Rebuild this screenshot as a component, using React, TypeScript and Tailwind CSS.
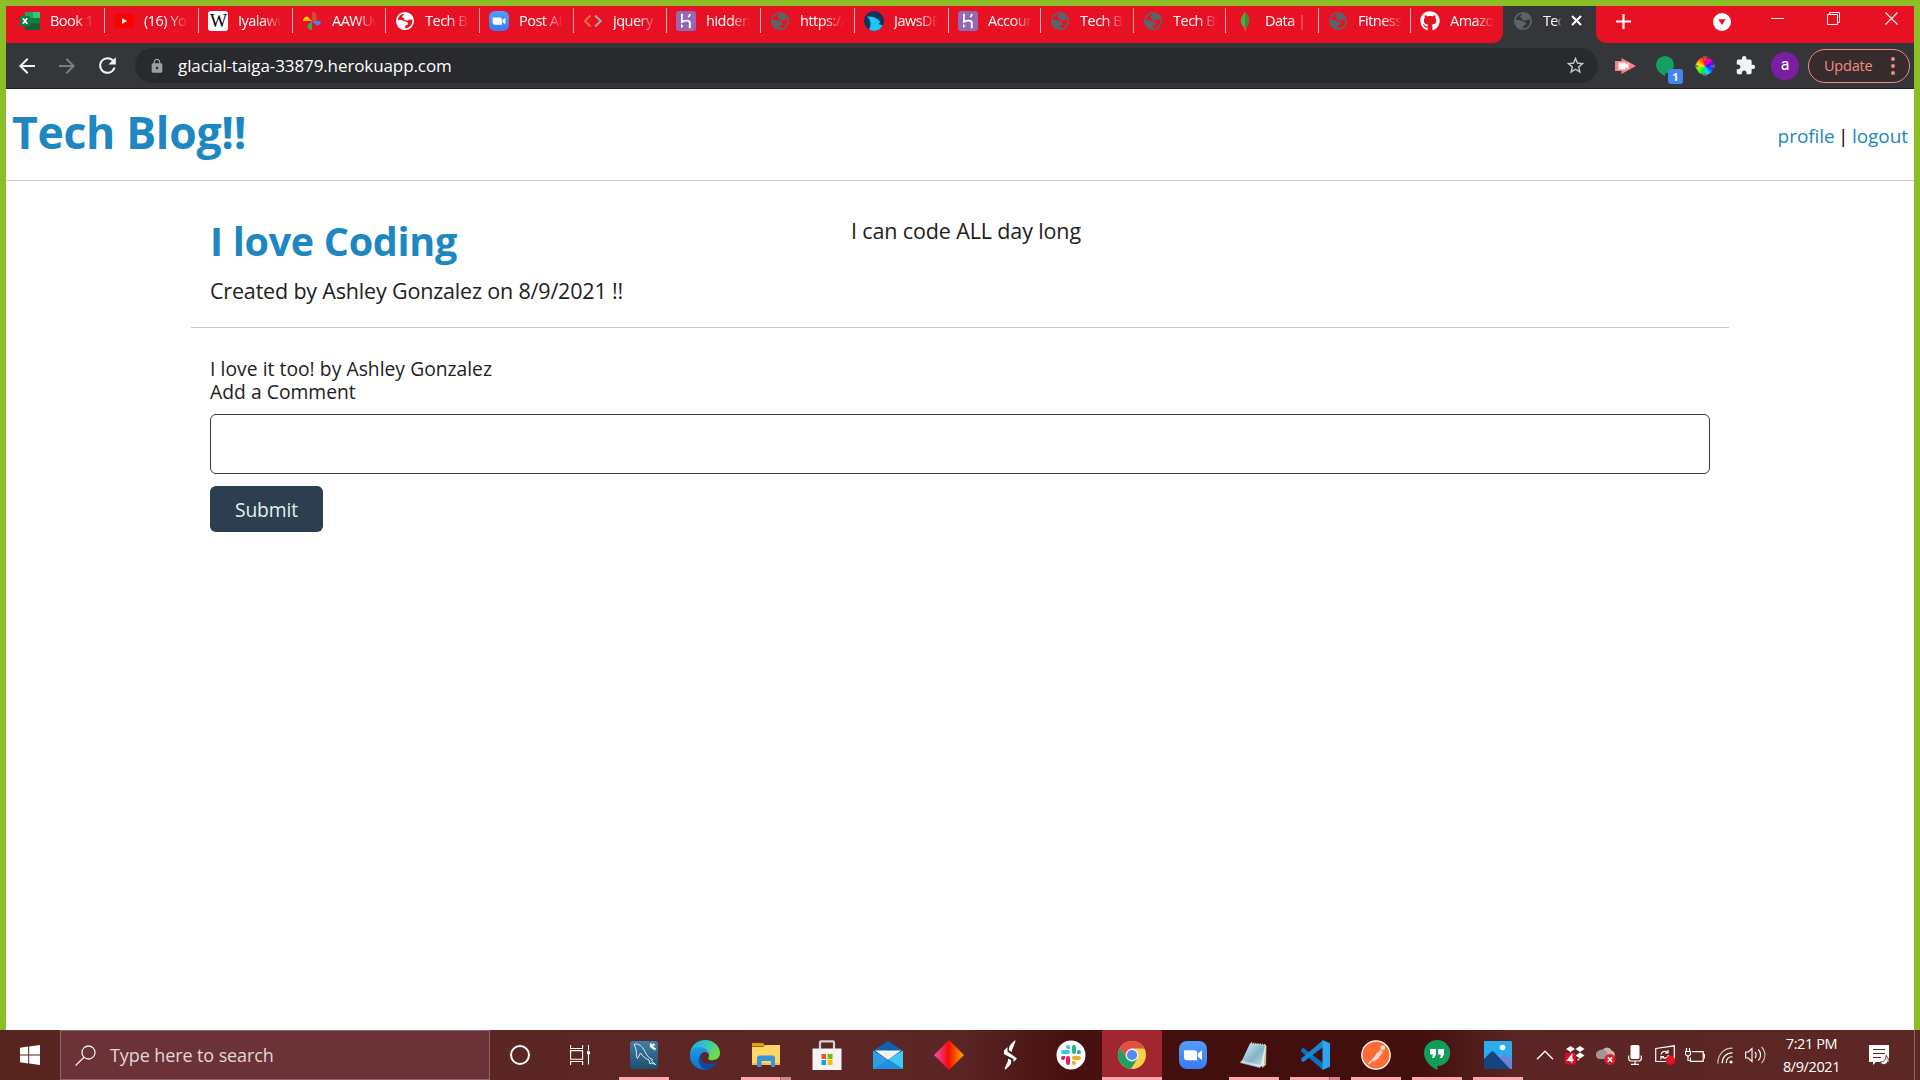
import React from 'react';
import type { ReactNode } from 'react';
import { MdLock, MdExtension, MdStarBorder, MdArrowBack, MdArrowForward, MdRefresh } from 'react-icons/md';
import { FaGithub } from 'react-icons/fa';

/* ---------- tab icons ---------- */

function Globe({ color }: { color: string }) {
  return (
    <svg width="20" height="20" viewBox="0 0 20 20">
      <circle cx="10" cy="10" r="8.2" fill="none" stroke={color} strokeWidth="1.7" />
      <path
        fill={color}
        d="M10 1.8 C13 1.500 16 3.2 17.5 6.5 L17 8.500 L14 8.700 L12.500 9.800 L9.500 9 L8.800 7 L6.800 6 L8.500 4 Z M2 9 L6.500 9 L9.500 10.300 L12.500 11.300 L13 13.500 L10.500 14.500 L9.500 17.800 C5 17.500 2 14 2 9 Z"
      />
    </svg>
  );
}

function Excel() {
  return (
    <svg width="20" height="20" viewBox="0 0 20 20">
      <path fill="#21a366" d="M5 1h8v6H5z" />
      <path fill="#33c481" d="M13 1h7v6h-7z" />
      <path fill="#107c41" d="M5 7h8v6H5zM13 7h7v6h-7z" />
      <path fill="#185c37" d="M5 12.5h15V19H5z" />
      <path fill="#107c41" d="M0 5h10v10H0z" />
      <path stroke="#fff" strokeWidth="1.7" d="M2.8 7.2 7.2 12.8M7.2 7.2 2.8 12.8" />
    </svg>
  );
}

function Youtube() {
  return (
    <svg width="20" height="20" viewBox="0 0 20 20">
      <rect y="3" width="20" height="14" rx="3" fill="#ff0000" />
      <path fill="#fff" d="M8 7.2v5.6l5-2.8z" />
    </svg>
  );
}

function Wikipedia() {
  return (
    <span className="flex h-5 w-5 items-center justify-center rounded-[3px] bg-white font-['Liberation_Serif',serif] text-[18px] leading-none tracking-[-1px] text-black">
      W
    </span>
  );
}

function Photos() {
  return (
    <svg width="20" height="20" viewBox="0 0 20 20">
      <path fill="#d5493a" d="M10 1c3 0 4.7 2 4.7 4.5V10L10 9.500z" />
      <path fill="#4285f4" d="M19 10c0 3-2 4.600-4.500 4.600L10 10z" />
      <path fill="#34a853" d="M10 19c-3 0-4.600-2-4.600-4.500L10 10z" />
      <path fill="#fbbc04" d="M1 10c0-3 2-4.600 4.500-4.600L10 10z" />
    </svg>
  );
}

function ZoomLogo({ size }: { size: number }) {
  return (
    <svg width={size} height={size} viewBox="0 0 28 28">
      <defs>
        <linearGradient id="zm" x1="0" y1="0" x2="0" y2="1">
          <stop offset="0" stopColor="#539cfb" />
          <stop offset="1" stopColor="#3a7bf5" />
        </linearGradient>
      </defs>
      <rect width="28" height="28" rx="8" fill="url(#zm)" />
      <path fill="#fff" d="M5 9.200h10.500a2.500 2.500 0 0 1 2.500 2.500v7.500H8a3 3 0 0 1-3-3zM18.800 12.500l4.200-3.200v9.600l-4.200-3.200z" />
    </svg>
  );
}

function Code() {
  return (
    <svg width="20" height="20" viewBox="0 0 20 20" fill="none" strokeWidth="2">
      <path stroke="#f0703c" d="M7.500 4.500 1.800 10l5.700 5.500" />
      <path stroke="#a4a9b0" d="M12 4.500 17.700 10 12 15.500" />
    </svg>
  );
}

function Heroku() {
  return (
    <svg width="20" height="20" viewBox="0 0 20 20">
      <rect width="20" height="20" rx="3" fill="#9468b4" />
      <path fill="none" stroke="#fff" strokeWidth="1.900" d="M5.900 2.800v8c2.500-1.300 7.900-2.300 7.900 1V17.200" />
      <path fill="none" stroke="#fff" strokeWidth="1.700" d="M14 2.800c-.2 1.400-.8 2.400-1.800 3.500" />
      <path fill="#fff" d="M5 12.800 7.600 15 5 17.200z" />
    </svg>
  );
}

function Jaws() {
  return (
    <svg width="20" height="20" viewBox="0 0 20 20">
      <circle cx="10" cy="10" r="10" fill="#0b3560" />
      <path fill="#20c4f4" d="M3 5.500c5-.5 10 1 13.500 5.500L14.500 13l4.300 1.500A10 10 0 0 1 5 18.600C7.500 14 7 9 3 5.500z" />
    </svg>
  );
}

function Mongo() {
  return (
    <svg width="20" height="20" viewBox="0 0 20 20">
      <path fill="#4faa41" d="M10 .8c1.500 3 4.200 4.700 4.200 9 0 3.800-2 5.800-4.200 7.400-2.200-1.600-4.200-3.600-4.200-7.400 0-4.300 2.700-6 4.200-9z" />
      <path fill="#3b8b38" d="M10 .8c1.500 3 4.200 4.700 4.200 9 0 3.800-2 5.800-4.200 7.400z" />
      <path fill="#b8a084" d="M9.600 16.500h.9l.2 3h-1z" />
    </svg>
  );
}

interface TabData {
  width: string;
  title: string;
  icon: ReactNode;
}

const tabs: TabData[] = [
  { width: 'w-[94px]', title: 'Book 1', icon: <Excel /> },
  { width: 'w-[94px]', title: '(16) You', icon: <Youtube /> },
  { width: 'w-[94px]', title: 'Iyalawo', icon: <Wikipedia /> },
  { width: 'w-[93px]', title: 'AAWUw', icon: <Photos /> },
  { width: 'w-[94px]', title: 'Tech Bl', icon: <Globe color="#ffffff" /> },
  { width: 'w-[94px]', title: 'Post Att', icon: <ZoomLogo size={20} /> },
  { width: 'w-[93px]', title: 'jquery', icon: <Code /> },
  { width: 'w-[94px]', title: 'hidden', icon: <Heroku /> },
  { width: 'w-[94px]', title: 'https://', icon: <Globe color="#5f6368" /> },
  { width: 'w-[94px]', title: 'JawsDB', icon: <Jaws /> },
  { width: 'w-[92px]', title: 'Account', icon: <Heroku /> },
  { width: 'w-[93px]', title: 'Tech Bl', icon: <Globe color="#5f6368" /> },
  { width: 'w-[92px]', title: 'Tech Bl', icon: <Globe color="#5f6368" /> },
  { width: 'w-[93px]', title: 'Data | C', icon: <Mongo /> },
  { width: 'w-[92px]', title: 'Fitness', icon: <Globe color="#5f6368" /> },
];

const fade = '[mask-image:linear-gradient(to_right,black_55%,transparent_98%)]';

function Tab({ width, title, icon, last }: TabData & { last?: boolean }) {
  return (
    <div className={`flex h-[29px] shrink-0 items-center ${width}`}>
      <span className="ml-[9px] flex h-5 w-5 shrink-0 items-center justify-center">{icon}</span>
      <span className={`ml-[10px] w-[45px] overflow-hidden whitespace-nowrap text-[14.5px] leading-5 tracking-[-0.5px] text-white ${fade}`}>
        {title}
      </span>
      {!last && <span className="ml-auto h-[25px] w-px bg-[#f8b4ba]" />}
    </div>
  );
}

function TabStrip() {
  return (
    <div className="flex h-[37px] bg-[#e81123] pl-[5px]">
      {tabs.map((t, i) => (
        <Tab key={i} {...t} />
      ))}
      <div className="flex h-[37px] w-[92px] shrink-0 bg-[#35363a]">
        <div className="h-[37px] w-[92px] rounded-br-[10px] bg-[#e81123]">
          <Tab width="w-[92px]" title="Amazon" icon={<FaGithub size={20} color="#fff" />} last />
        </div>
      </div>
      <div className="flex h-[37px] w-[93px] shrink-0 bg-[#35363a]">
        <div className="flex h-[29px] items-center">
          <span className="ml-[10px]">
            <Globe color="#5f6368" />
          </span>
          <span className="ml-[10px] w-[19px] overflow-hidden whitespace-nowrap text-[14.5px] leading-5 tracking-[-0.8px] text-white [mask-image:linear-gradient(to_right,black_65%,transparent)]">
            Tech
          </span>
          <svg className="ml-[9px]" width="11" height="11" viewBox="0 0 11 11" stroke="#fff" strokeWidth="2">
            <path d="M1 1 10 10M10 1 1 10" />
          </svg>
        </div>
      </div>
      <div className="-mr-px h-[37px] w-[318px] bg-[#35363a]">
        <div className="flex h-[37px] rounded-bl-[10px] bg-[#e81123] pl-[20px]">
          <svg className="mt-[8px]" width="15" height="15" viewBox="0 0 15 15" stroke="#fff" strokeWidth="2.200">
            <path d="M7.500 0V15M0 7.500H15" />
          </svg>
          <svg className="ml-[82px] mt-[7px]" width="18" height="18" viewBox="0 0 18 18">
            <circle cx="9" cy="9" r="9" fill="#fff" />
            <path fill="#e81123" d="M5.300 6.200h7.400L9 12z" />
          </svg>
          <svg className="ml-[40px] mt-[12px]" width="13" height="1" viewBox="0 0 13 1">
            <path fill="#fff" d="M0 0h13v1H0z" />
          </svg>
          <svg className="ml-[43px] mt-[6px]" width="13" height="13" viewBox="0 0 13 13" fill="none" stroke="#fff">
            <path d="M.5 2.500h10v10H.5zM2.500 2.500v-2h10v10h-2" />
          </svg>
          <svg className="ml-[45px] mt-[6px]" width="13" height="13" viewBox="0 0 13 13" stroke="#fff" strokeWidth="1.100">
            <path d="M.5.500 12.500 12.500M12.500.500.5 12.500" />
          </svg>
        </div>
      </div>
    </div>
  );
}

function ColorWheel() {
  return (
    <span className="relative flex h-5 w-5 items-center justify-center">
      <span className="h-[18px] w-[18px] rounded-full bg-[conic-gradient(#ff0030,#ff00d0,#4b00ff,#0060ff,#00e5ff,#00e060,#60ff00,#ffee00,#ff7000,#ff0030)]" />
      <svg className="absolute inset-0" width="20" height="20" viewBox="0 0 20 20" fill="#35363a" stroke="#b0b0b0" strokeWidth=".5">
        <path d="M10 4.500 8.800 0h2.400zM10 15.500 8.800 20h2.400zM4.500 10 0 8.800v2.400zM15.500 10 20 8.800v2.400z" />
      </svg>
    </span>
  );
}

function Toolbar() {
  return (
    <div className="flex h-[46px] items-center border-b border-[#232427] bg-[#35363a] text-[#f1f3f4]">
      <MdArrowBack size={24} className="ml-[9px]" />
      <MdArrowForward size={24} className="ml-[16px] text-[#7d7e81]" />
      <MdRefresh size={25} className="ml-[16px]" />
      <div className="ml-[15px] flex h-[35px] w-[1463px] items-center rounded-full bg-[#292a2d]">
        <MdLock size={16} className="ml-[14px] text-[#9aa0a6]" />
        <span className="ml-[13px] text-[17px] leading-6 tracking-[-0.1px] text-white">glacial-taiga-33879.herokuapp.com</span>
        <MdStarBorder size={21} className="ml-auto mr-[12px] text-[#c8cacd]" />
      </div>
      <svg className="ml-[17px]" width="21" height="16" viewBox="0 0 21 16">
        <path fill="#ff8080" d="M0 3h6.500V0L21 8 6.500 16v-3H0z" />
        <path fill="#fff" d="M3.500 4.500h7V7l3-2.500v7l-3-2.500v2.500h-7z" />
      </svg>
      <span className="relative ml-[20px] h-[30px] w-[27px]">
        <svg className="absolute left-0 top-[5px]" width="19" height="20" viewBox="0 0 19 20">
          <path fill="#12a05c" d="M9 0a9 8.700 0 1 1 0 17.400V20C5 18 0 14 0 8.700A9 8.700 0 0 1 9 0z" />
        </svg>
        <span className="absolute left-[12px] top-[18px] h-[15px] w-[15px] rounded-[3px] bg-[#4285f4] text-center text-[11px] font-bold leading-[15px] text-white">
          1
        </span>
      </span>
      <span className="ml-[12px]">
        <ColorWheel />
      </span>
      <MdExtension size={21} className="ml-[20px]" />
      <span className="ml-[15px] flex h-7 w-7 items-center justify-center rounded-full bg-[#7b1fa2] pb-[2px] font-[Roboto,sans-serif] text-[16px] text-white">
        a
      </span>
      <div className="ml-[9px] flex h-[34px] w-[102px] shrink-0 items-center rounded-full border border-[#f28b82] bg-[#372b2d]">
        <span className="ml-[15px] w-[49px] whitespace-nowrap text-[14.5px] tracking-[-0.2px] text-[#f28b82]">Update</span>
        <span className="ml-[18px] flex flex-col gap-[3px]">
          <span className="h-1 w-1 rounded-full bg-[#f28b82]" />
          <span className="h-1 w-1 rounded-full bg-[#f28b82]" />
          <span className="h-1 w-1 rounded-full bg-[#f28b82]" />
        </span>
      </div>
    </div>
  );
}

function BlogPage() {
  return (
    <div className="flex-1 bg-white text-[#212121]">
      <header className="flex h-[92px] justify-between border-b border-[#cccccc] px-[6px]">
        <h1 className="pt-[13px] text-[44.5px] font-bold leading-[60px] tracking-[-0.3px] text-[#1c87c0]">Tech Blog!!</h1>
        <nav className="pt-[35px] text-[19px] leading-[24px] tracking-[-0.05px] text-black [word-spacing:-1.5px]">
          <a className="text-[#1c87c0]">profile</a> | <a className="text-[#1c87c0]">logout</a>
        </nav>
      </header>
      <main className="ml-[185px] mt-[31px] w-[1538px]">
        <section className="flex h-[116px] border-b border-[#c8c8c8] px-[19px]">
          <div className="w-[641px]">
            <h2 className="pt-[2px] text-[39.5px] font-bold leading-[54px] tracking-[-0.3px] text-[#1c87c0]">I love Coding</h2>
            <p className="mt-[8px] text-[21.5px] leading-[30px] tracking-[-0.18px]">Created by Ashley Gonzalez on 8/9/2021 !!</p>
          </div>
          <p className="pt-[4px] text-[21.5px] leading-[30px] tracking-[-0.13px]">I can code ALL day long</p>
        </section>
        <section className="px-[19px] pt-[29px] text-[19.25px] leading-[23px] [word-spacing:0.2px]">
          <p>I love it too! by Ashley Gonzalez</p>
          <p>Add a Comment</p>
          <div className="mt-[11px] h-[60px] rounded-md border border-[#3c3c3c] bg-white" />
          <button className="mt-[12px] h-[46px] w-[113px] rounded-md bg-[#2d3e50] text-[19.25px] tracking-[-0.1px] text-[#dff3ec]">Submit</button>
        </section>
      </main>
    </div>
  );
}

/* ---------- taskbar icons ---------- */

function Workbench() {
  return (
    <svg width="28" height="28" viewBox="0 0 28 28">
      <defs>
        <linearGradient id="wb" x1="0" y1="0" x2="0" y2="1">
          <stop offset="0" stopColor="#3f7ea8" />
          <stop offset="1" stopColor="#1e4f6e" />
        </linearGradient>
      </defs>
      <rect width="28" height="28" rx="3" fill="url(#wb)" />
      <path
        fill="none"
        stroke="#e3eef5"
        strokeWidth="1"
        d="M4 3.500c3-1.500 7 .5 9.500 4.500 2 3 3 6.500 6 9l3 1.500-1 1.500 4 3.500-4-1.500-1.500 1-1-4c-4-1.500-6.500-4-8.500-7l-3 5.500c-2-2-.5-6-1.500-9C5.500 6.500 5 5 4 3.500z"
      />
      <path stroke="#fff" strokeWidth="2.200" d="M21 2.500v3l4.500 3M24.500 3l-3.500 3" />
    </svg>
  );
}

function Edge() {
  return (
    <svg width="30" height="30" viewBox="0 0 30 30">
      <defs>
        <linearGradient id="eg1" x1="0" y1="0" x2="1" y2=".5">
          <stop offset="0" stopColor="#1fa4e8" />
          <stop offset=".5" stopColor="#35c4c0" />
          <stop offset="1" stopColor="#6fdc4e" />
        </linearGradient>
        <linearGradient id="eg2" x1="0" y1="0" x2="0" y2="1">
          <stop offset="0" stopColor="#1e9be6" />
          <stop offset="1" stopColor="#0c6fd0" />
        </linearGradient>
      </defs>
      <path fill="url(#eg1)" d="M0 14C.8 5.500 7 0 15 0c9 0 15 6.500 15 13 0 5-4 7.200-7.500 7.200-3.500 0-5-1.200-4-2.700 2-3.500-1-7-5-7C7 10.500 3 14 0 14z" />
      <path fill="url(#eg2)" d="M0 15.500C0 10 4.500 7 9.500 7c5.500 0 9.500 3.500 9.500 8-1-3-6.500-5-8.500 0C8 22 13 28 19.500 29.300 8.500 32 0 25 0 15.500z" />
      <path fill="#114a9b" d="M11.500 13.500C9 18 12 23 18 23.800c4 .5 7-.6 9.800-2.300C25.500 26 20.500 30 16 30 8.500 27.500 6.500 18 11.500 13.500z" />
    </svg>
  );
}

function Explorer() {
  return (
    <svg width="28" height="24" viewBox="0 0 28 24">
      <path fill="#e3a200" d="M0 0h11l3 3.500H0z" />
      <path fill="#ffd565" d="M0 4h11l2.500-2H28v20H0z" />
      <path fill="#f3c146" d="M0 20h28v2H0z" />
      <path fill="#3a94dc" d="M5 24V15a2.500 2.500 0 0 1 2.500-2.500h13A2.500 2.500 0 0 1 23 15v9h-4v-6H9.500v6z" />
    </svg>
  );
}

function Store() {
  return (
    <svg width="30" height="30" viewBox="0 0 30 30">
      <path fill="none" stroke="#d4d4d4" strokeWidth="2.200" d="M8 9V2.500a1.200 1.200 0 0 1 1.200-1.200h11.600A1.200 1.200 0 0 1 22 2.500V9" />
      <path fill="#f3f3f3" d="M.5 8.500h29V30H.5z" />
      <path fill="#f25022" d="M9.500 14H14v5H9.500z" />
      <path fill="#7fba00" d="M15.500 14h5v5h-5z" />
      <path fill="#00a4ef" d="M9.500 20H14v5H9.500z" />
      <path fill="#ffb900" d="M15.500 20h5v5h-5z" />
    </svg>
  );
}

function Mail() {
  return (
    <svg width="30" height="28" viewBox="0 0 30 28">
      <path fill="#0a63b5" d="M0 10 15 0l15 10v4H0z" />
      <path fill="#f4f4f4" d="M2 9.500h26L15 19z" />
      <path fill="#2c9fe6" d="M0 9.500 15 19l15 9H0z" />
      <path fill="#42c8f5" d="M30 9.500V28L15 18.500z" />
      <path fill="#1f8fe0" d="M0 28l15-9.500L30 28z" />
    </svg>
  );
}

function Diamond() {
  return (
    <svg width="30" height="30" viewBox="0 0 30 30">
      <defs>
        <linearGradient id="dm">
          <stop offset="0" stopColor="#ee4fc0" />
          <stop offset=".48" stopColor="#fb0a0a" />
          <stop offset=".52" stopColor="#f51800" />
          <stop offset="1" stopColor="#ffa800" />
        </linearGradient>
      </defs>
      <path fill="url(#dm)" d="M15 0 30 15 15 30 0 15z" />
    </svg>
  );
}

function Bolt() {
  return (
    <svg width="14" height="30" viewBox="0 0 14 30" fill="#fff">
      <path d="M12.500 0C8 3.500 5.500 6 6 10.500l3 1.500C9 7.500 12 5.500 12.500 0zM1 10.500 4.500 7v4.500L14 18.500 10.500 22v-3L.8 14zM1.800 30C6 26.500 9 24.500 8 20l-3-1.500C5.500 23 2 24.500 1.800 30z" />
    </svg>
  );
}

function Slack() {
  return (
    <svg width="30" height="30" viewBox="0 0 30 30">
      <circle cx="15" cy="15" r="14.500" fill="#fff" />
      <g fill="#36c5f0">
        <rect x="5" y="10" width="9" height="4" rx="2" />
        <path d="M14 9h-2a2 2 0 1 1 2-2z" />
      </g>
      <g fill="#2eb67d">
        <rect x="16" y="5" width="4" height="9" rx="2" />
        <path d="M21 14v-2a2 2 0 1 1 2 2z" />
      </g>
      <g fill="#ecb22e">
        <rect x="16" y="16" width="9" height="4" rx="2" />
        <path d="M16 21h2a2 2 0 1 1-2 2z" />
      </g>
      <g fill="#e01e5a">
        <rect x="10" y="16" width="4" height="9" rx="2" />
        <path d="M9 16v2a2 2 0 1 1-2-2z" />
      </g>
    </svg>
  );
}

function Chrome() {
  return (
    <svg width="28" height="28" viewBox="0 0 28 28">
      <circle cx="14" cy="14" r="14" fill="#ffd04b" />
      <path fill="#dd5144" d="M1.900 7 8.400 17.200 14 7.500h12.400A14 14 0 0 0 1.900 7z" />
      <path fill="#1aa260" d="M1.900 7l6.500 10.200 5.600 3.300 5.300-2.500-6.400 10A14 14 0 0 1 1.900 7z" />
      <circle cx="14" cy="14" r="6.400" fill="#f1f1f1" />
      <circle cx="14" cy="14" r="5.100" fill="#4f8af5" />
    </svg>
  );
}

function Notepad() {
  return (
    <svg width="28" height="28" viewBox="0 0 28 28">
      <defs>
        <linearGradient id="np" x1="0" y1="0" x2="1" y2="1">
          <stop offset="0" stopColor="#e4f3f6" />
          <stop offset=".55" stopColor="#7fb6c4" />
          <stop offset="1" stopColor="#c8e4ea" />
        </linearGradient>
      </defs>
      <path fill="#c9b68c" d="M23 5h3.500l-.5 19-4 3z" />
      <path fill="#e8eeee" d="M10 2.500 26 4l-2.500 21.500L14 24z" />
      <path fill="url(#np)" d="M10 2.500 25 4.500l-4.500 22L1 21.500z" />
      <path fill="#f4fafa" d="M1 19.500 0 22l20 5 1-3z" opacity=".55" />
      <path fill="none" stroke="#d9d9d9" strokeWidth="1.600" strokeDasharray="1 1.200" d="M11 2 26 4" />
    </svg>
  );
}

function VSCode() {
  return (
    <svg width="30" height="30" viewBox="0 0 30 30">
      <path fill="#0a74c4" d="M1.200 9.500 3.200 7.800l20 15.200V30L1.200 11.500z" />
      <path fill="#1686d0" d="M1.200 20.500l2 1.700L23.200 7V0L1.200 18.500z" />
      <path fill="#2ba5ef" d="M22.500 0 30 3.200v23.600L22.500 30z" />
    </svg>
  );
}

function Postman() {
  return (
    <svg width="30" height="30" viewBox="0 0 30 30">
      <circle cx="15" cy="15" r="14.200" fill="#ff6c37" stroke="#fff" strokeWidth="1.300" />
      <circle cx="21.700" cy="7.700" r="2.300" fill="#fbe3da" />
      <path fill="#fbd6c8" d="M20 9.500 22 12 16.500 19 12.500 20 15 14z" />
      <path stroke="#fbe3da" strokeWidth="1.300" d="M16 15 7.500 24M17.500 17 12 21.500" />
    </svg>
  );
}

function Hangouts() {
  return (
    <svg width="26" height="30" viewBox="0 0 26 30">
      <path fill="#109d58" d="M13 0a13 13 0 1 1 .5 26v4C7 27 0 21 0 13A13 13 0 0 1 13 0z" />
      <path fill="#fff" d="M6 9h6v5.500L10 18H8l1-3.500H6zM14 9h6v5.500L18 18h-2l1-3.500h-3z" />
    </svg>
  );
}

function PhotosApp() {
  return (
    <svg width="28" height="28" viewBox="0 0 28 28">
      <rect width="28" height="28" rx="1" fill="#2badeb" />
      <path fill="#6f82da" d="M12 22 18.500 13.500c1-1 2-1 3 0L28 20v8H12z" />
      <path fill="#15457f" d="M0 18 7 11c1-1 2-1 3 0L26 28H0z" />
      <circle cx="18.500" cy="6.500" r="2.800" fill="#f4f7f8" />
    </svg>
  );
}

interface AppData {
  icon: ReactNode;
  state: 'closed' | 'open' | 'stacked' | 'active';
}

const apps: AppData[] = [
  { icon: <Workbench />, state: 'open' },
  { icon: <Edge />, state: 'closed' },
  { icon: <Explorer />, state: 'stacked' },
  { icon: <Store />, state: 'closed' },
  { icon: <Mail />, state: 'closed' },
  { icon: <Diamond />, state: 'closed' },
  { icon: <Bolt />, state: 'closed' },
  { icon: <Slack />, state: 'closed' },
  { icon: <Chrome />, state: 'active' },
  { icon: <ZoomLogo size={28} />, state: 'closed' },
  { icon: <Notepad />, state: 'open' },
  { icon: <VSCode />, state: 'stacked' },
  { icon: <Postman />, state: 'open' },
  { icon: <Hangouts />, state: 'open' },
  { icon: <PhotosApp />, state: 'open' },
];

function AppButton({ icon, state }: AppData) {
  return (
    <div className="flex h-[50px] w-[61px] shrink-0 flex-col items-center">
      <div className={`flex h-[47px] w-[60px] items-center justify-center pt-[3px] ${state === 'active' ? 'bg-[#a0262f]' : ''}`}>{icon}</div>
      {state === 'active' && <div className="h-[3px] w-[60px] bg-[#ffa7b1]" />}
      {state === 'open' && <div className="h-[3px] w-[50px] bg-[#ffa7b1]" />}
      {state === 'stacked' && (
        <div className="flex h-[3px] w-[50px]">
          <div className="w-[39px] bg-[#ffa7b1]" />
          <div className="w-[11px] border-l border-[#a06a70] bg-[#cf868f]" />
        </div>
      )}
    </div>
  );
}

const trayIcons: ReactNode[] = [
  <svg width="18" height="10" viewBox="0 0 18 10" fill="none" stroke="#fff" strokeWidth="1.300">
    <path d="M1 9.200 9 1.200l8 8" />
  </svg>,
  <svg width="20" height="20" viewBox="0 0 20 20">
    <path fill="#fff" d="M5.500 1 10 4 5.500 7 1 4zM15 1l4.500 3L15 7l-4.500-3zM15 7.500l4.500 3-4.500 3-4.500-3zM5.500 7.500l4.500 3-4.500 3-4.500-3zM12 14.500l3-1.500-2 3z" />
    <rect x="0" y="8" width="11" height="11.500" rx="1.500" fill="#dc0a2d" />
    <path fill="none" stroke="#fff" strokeWidth="1.700" d="M6.600 17.500v-7L3 15.200h5.600" />
  </svg>,
  <svg width="22" height="20" viewBox="0 0 22 20">
    <path fill="#cbb4b4" d="M8 7a5 5 0 0 1 9.500-1.500A4.500 4.500 0 0 1 18 14H8z" />
    <path fill="#a89494" d="M5 14A4.500 4.500 0 0 1 5 5.500 5.500 5.500 0 0 1 13 7l3 7z" />
    <circle cx="16" cy="14.500" r="5.500" fill="#d6202a" />
    <path stroke="#fff" strokeWidth="1.600" d="M13.800 12.300l4.400 4.400M18.200 12.300l-4.400 4.400" />
  </svg>,
  <svg width="14" height="20" viewBox="0 0 14 20">
    <rect x="2.500" y="0" width="9" height="14" rx="1.500" fill="#fff" />
    <path fill="none" stroke="#fff" strokeWidth="1.200" d="M.7 10.500v3c0 1.500 1 2.500 2.500 2.500h7.600c1.500 0 2.500-1 2.500-2.500v-3M7 16v3M3 19.300h8" />
  </svg>,
  <svg width="20" height="20" viewBox="0 0 20 20" fill="none" stroke="#fff" strokeWidth="1.200">
    <path d="M.7 3.500 19.300.8v15L9 16.500H.7z" />
    <path d="M6 9.500C6.500 6.500 10 5.500 12.300 7.500M13 5v3h-3M13.500 10c-.5 3-4 4-6.300 2M6 14.500v-3h3" />
    <circle cx="15.500" cy="15.200" r="4.600" fill="#e81123" stroke="none" />
  </svg>,
  <svg width="20" height="15" viewBox="0 0 20 15" fill="none" stroke="#fff" strokeWidth="1.200">
    <path d="M7 3.600h11.200v9.800H5.500V9.500M18.500 6.500h1.200v4M1.500 0v3M4.500 0v3M.5 3.500h5v3l-2.500 2-2.500-2zM3 8.500v4h2" />
  </svg>,
  <svg width="16" height="17" viewBox="0 0 16 17" fill="none" stroke="#d8c6c6" strokeWidth="1.200">
    <circle cx="14" cy="15" r="1.600" fill="#fff" stroke="none" />
    <path stroke="#fff" d="M9.300 16A5.500 5.500 0 0 1 15.500 9.800M5.200 16.200C5.200 10 9.500 5.800 15.500 5.800" />
    <path d="M.8 16.500C.8 7.500 7 1 15.500 1.200" />
  </svg>,
  <svg width="21" height="18" viewBox="0 0 21 18" fill="none" stroke="#fff" strokeWidth="1.100">
    <path d="M.6 6v6h2.600L7 15.500v-13L3.200 6zM10 6c1.500 1.500 1.500 4.500 0 6M13.300 3.500c3 3 3 8 0 11" />
    <path stroke="#d8c6c6" d="M16.500 1c4.500 4.500 4.500 11.500 0 16" />
  </svg>,
];

function Taskbar() {
  return (
    <div className="flex h-[50px] bg-[linear-gradient(90deg,#58241f_0%,#5d2725_45%,#5a2524_50%,#471110_55.5%,#430f0e_62%,#430f0e_74%,#5a2524_79%,#5d2725_100%)]">
      <div className="flex w-[60px] shrink-0 items-center justify-center">
        <svg width="20" height="20" viewBox="0 0 20 20" fill="#fff">
          <path d="M0 2.800 8.200 1.600V9.500H0zM9.200 1.400 20 0v9.500H9.200zM0 10.500h8.200v7.900L0 17.300zM9.200 10.500H20V20L9.200 18.600z" />
        </svg>
      </div>
      <div className="flex w-[430px] shrink-0 items-center border border-[#8f6367] bg-[#6b3238]">
        <svg className="ml-[14px]" width="21" height="21" viewBox="0 0 21 21" fill="none" stroke="#f3eaea" strokeWidth="1.300">
          <circle cx="13.500" cy="7.500" r="6.500" />
          <path d="M9 12.200.6 20.500" />
        </svg>
        <span className="ml-[14px] text-[18px] leading-6 tracking-[-0.1px] text-[#e3d6d8]">Type here to search</span>
      </div>
      <div className="flex w-[60px] shrink-0 items-center justify-center">
        <span className="h-5 w-5 rounded-full border-[2.5px] border-white" />
      </div>
      <div className="flex w-[63.5px] shrink-0 items-center pl-[20px]">
        <svg width="20" height="20" viewBox="0 0 20 20" fill="none" stroke="#fff" strokeWidth="1.100">
          <path d="M.6 0v3.500h12V0M.6 5.600h12v8.700H.6zM.6 20v-3.500h12V20M18.500 0v5.500M18.500 9v10.500" />
          <path fill="#fff" stroke="none" d="M17 6.200h3v3h-3z" />
        </svg>
      </div>
      {apps.map((a, i) => (
        <AppButton key={i} {...a} />
      ))}
      <div className="ml-auto flex items-center">
        {trayIcons.map((icon, i) => (
          <span key={i} className="flex w-[30px] shrink-0 items-center justify-center">
            {icon}
          </span>
        ))}
        <div className="w-[83px] text-center text-[14.5px] leading-[23px] tracking-[-0.4px] text-white">
          <p className="whitespace-nowrap">7:21 PM</p>
          <p className="whitespace-nowrap">8/9/2021</p>
        </div>
        <svg className="ml-[16px]" width="20" height="20" viewBox="0 0 20 20">
          <path fill="#fff" d="M0 0h20v17H7l-3 3v-3H0z" />
          <path stroke="#5d2725" strokeWidth="1.100" d="M4 4.500h12M4 8.500h12M4 12.500h8" />
          <path fill="#fff" stroke="#5d2725" strokeWidth="1" d="M17 10.500c3 2 3.500 8-1.500 9-2 .3-3.500-.5-4.500-2.500 3 .5 6.500-2 6-6.500z" />
        </svg>
        <span className="ml-[25px] mr-[5px] h-[50px] w-px bg-[#8c6765]" />
      </div>
    </div>
  );
}

export default function App() {
  return (
    <div className="flex h-[1080px] w-[1920px] flex-col overflow-hidden bg-[#8cbf26] font-['Open_Sans','Noto_Sans',sans-serif]">
      <div className="mx-[6px] mt-[6px] flex flex-1 flex-col overflow-hidden">
        <TabStrip />
        <Toolbar />
        <BlogPage />
      </div>
      <Taskbar />
    </div>
  );
}
